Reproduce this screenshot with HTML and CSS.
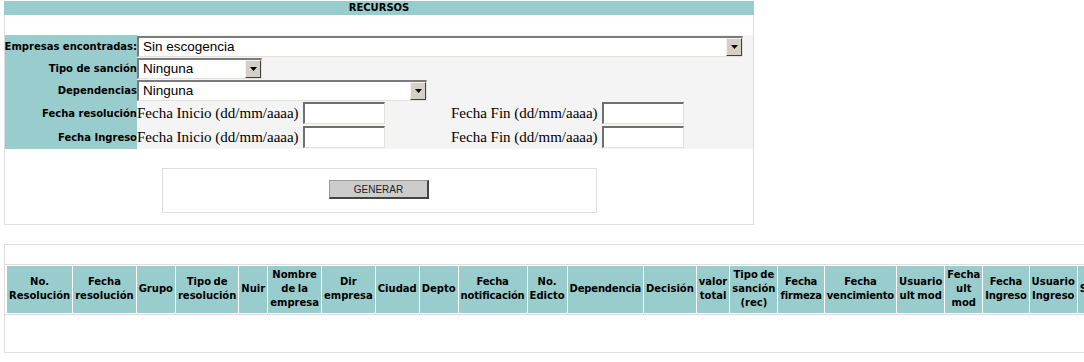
FILE: index.html
```html
<!DOCTYPE html>
<html lang="es">
<head>
    <meta charset="UTF-8">
    <meta name="viewport" content="width=device-width, initial-scale=1.0">
    <title>Recursos</title>
    <link rel="stylesheet" href="styles.css">
</head>
<body>
    <!-- Filtros -->
    <div class="panel">
        <div class="panel-title">RECURSOS</div>
        <div class="panel-gap"></div>
        <div class="filters">
            <label class="filter-label">Empresas encontradas:</label>
            <div class="filter-field">
                <span class="combo combo-xl">
                    <select><option>Sin escogencia</option></select>
                    <span class="combo-btn"><svg width="7" height="4" viewBox="0 0 7 4"><path d="M0 0h7L3.5 4z"/></svg></span>
                </span>
            </div>

            <label class="filter-label">Tipo de sanción</label>
            <div class="filter-field">
                <span class="combo combo-sm">
                    <select><option>Ninguna</option></select>
                    <span class="combo-btn"><svg width="7" height="4" viewBox="0 0 7 4"><path d="M0 0h7L3.5 4z"/></svg></span>
                </span>
            </div>

            <label class="filter-label">Dependencias</label>
            <div class="filter-field">
                <span class="combo combo-md">
                    <select><option>Ninguna</option></select>
                    <span class="combo-btn"><svg width="7" height="4" viewBox="0 0 7 4"><path d="M0 0h7L3.5 4z"/></svg></span>
                </span>
            </div>

            <label class="filter-label">Fecha resolución</label>
            <div class="filter-field">
                <span class="date-item">Fecha Inicio (dd/mm/aaaa) <input class="date-input" type="text"></span>
                <span class="date-item">Fecha Fin (dd/mm/aaaa) <input class="date-input" type="text"></span>
            </div>

            <label class="filter-label">Fecha Ingreso</label>
            <div class="filter-field">
                <span class="date-item">Fecha Inicio (dd/mm/aaaa) <input class="date-input" type="text"></span>
                <span class="date-item">Fecha Fin (dd/mm/aaaa) <input class="date-input" type="text"></span>
            </div>
        </div>

        <div class="actions">
            <div class="actions-box">
                <button class="btn">GENERAR</button>
            </div>
        </div>
    </div>

    <!-- Resultados -->
    <div class="results">
        <div class="results-top"></div>
        <table class="results-table">
            <thead>
                <tr>
                    <th>No. Resolución</th>
                    <th>Fecha resolución</th>
                    <th>Grupo</th>
                    <th>Tipo de resolución</th>
                    <th>Nuir</th>
                    <th>Nombre de la empresa</th>
                    <th>Dir empresa</th>
                    <th>Ciudad</th>
                    <th>Depto</th>
                    <th class="tight">Fecha notificación</th>
                    <th>No. Edicto</th>
                    <th class="tight">Dependencia</th>
                    <th>Decisión</th>
                    <th>valor total</th>
                    <th>Tipo de sanción (rec)</th>
                    <th class="tight">Fecha firmeza</th>
                    <th class="tight">Fecha vencimiento</th>
                    <th>Usuario ult mod</th>
                    <th>Fecha ult mod</th>
                    <th class="tight">Fecha Ingreso</th>
                    <th>Usuario Ingreso</th>
                    <th>Sanción</th>
                </tr>
            </thead>
        </table>
        <div class="results-bottom"></div>
    </div>
</body>
</html>
```

FILE: styles.css
```css
html {
    overflow-x: hidden;
}

body {
    margin: 1px 0 0 4px;
    font-family: 'DejaVu Sans', sans-serif;
    background-color: #fff;
    color: #000;
}

.panel {
    width: 748px;
    border: 1px solid #ddd;
    border-top: none;
}

.panel-title {
    margin: 0 -1px;
    height: 14px;
    line-height: 14px;
    background-color: #99cccc;
    font-size: 10px;
    font-weight: bold;
    text-align: center;
}

.panel-gap {
    height: 20px;
}

.filters {
    display: grid;
    grid-template-columns: 132px minmax(0, 1fr);
    grid-template-rows: 22px 22px 22px 24px 24px;
}

.filter-label {
    display: flex;
    align-items: center;
    justify-content: flex-end;
    background-color: #99cccc;
    font-size: 10px;
    font-weight: bold;
    white-space: nowrap;
}

.filter-field {
    display: flex;
    align-items: center;
    background-color: #f4f4f4;
    overflow: hidden;
}

.combo {
    position: relative;
    display: inline-block;
    height: 21px;
    box-sizing: border-box;
    border-style: solid;
    border-width: 2px 1px 1px 2px;
    border-color: #7b7b7b #e4e1da #e4e1da #7b7b7b;
    background-color: #fff;
}

.combo-xl { width: 606px; }
.combo-sm { width: 125px; }
.combo-md { width: 290px; }

.combo select {
    appearance: none;
    -webkit-appearance: none;
    display: block;
    width: 100%;
    height: 100%;
    margin: 0;
    padding: 0 20px 0 4px;
    border: none;
    outline: none;
    background: transparent;
    font-family: 'Liberation Sans', Arial, sans-serif;
    font-size: 13.5px;
    color: #000;
}

.combo-btn {
    position: absolute;
    top: 0;
    right: 0;
    width: 16px;
    height: 18px;
    box-sizing: border-box;
    display: flex;
    align-items: center;
    justify-content: center;
    background-color: #d4d0c8;
    border: 1px solid;
    border-color: #f4f3ef #404040 #404040 #f4f3ef;
    pointer-events: none;
}

.date-item {
    display: inline-flex;
    align-items: center;
    gap: 4px;
    font-family: 'Liberation Serif', 'Times New Roman', serif;
    font-size: 15px;
    white-space: nowrap;
}

.date-item:first-child {
    width: 314px;
}

.date-input {
    width: 82px;
    height: 22px;
    box-sizing: border-box;
    margin: 0;
    border-style: solid;
    border-width: 2px 1px 1px 2px;
    border-color: #6f6f6f #e4e1da #e4e1da #6f6f6f;
    background-color: #fff;
}

.actions {
    padding: 19px 0 11px 157px;
}

.actions-box {
    width: 433px;
    height: 32px;
    padding-top: 11px;
    border: 1px solid #ddd;
    display: flex;
    justify-content: center;
}

.btn {
    width: 100px;
    height: 19px;
    box-sizing: border-box;
    margin: 0 0 0 -1px;
    padding: 0;
    background-color: #cccccc;
    border-style: solid;
    border-width: 1px 2px 2px 1px;
    border-color: #999 #444 #444 #999;
    font-family: 'Liberation Sans', Arial, sans-serif;
    font-size: 10px;
    color: #222;
    cursor: pointer;
}

.results {
    display: inline-block;
    margin-top: 19px;
    border: 1px solid #ddd;
}

.results-top {
    height: 19px;
    border-bottom: 1px solid #ddd;
}

.results-table {
    margin-left: 1px;
    border-collapse: separate;
    border-spacing: 1px;
}

.results-table th {
    padding: 2px 2px 3px;
    background-color: #99cccc;
    font-size: 10px;
    font-weight: bold;
    line-height: 14px;
    word-spacing: -1px;
    text-align: center;
    vertical-align: middle;
}

.results-table th.tight {
    letter-spacing: -0.17px;
}

.results-bottom {
    height: 37px;
    border-top: 1px solid #ddd;
}
```
